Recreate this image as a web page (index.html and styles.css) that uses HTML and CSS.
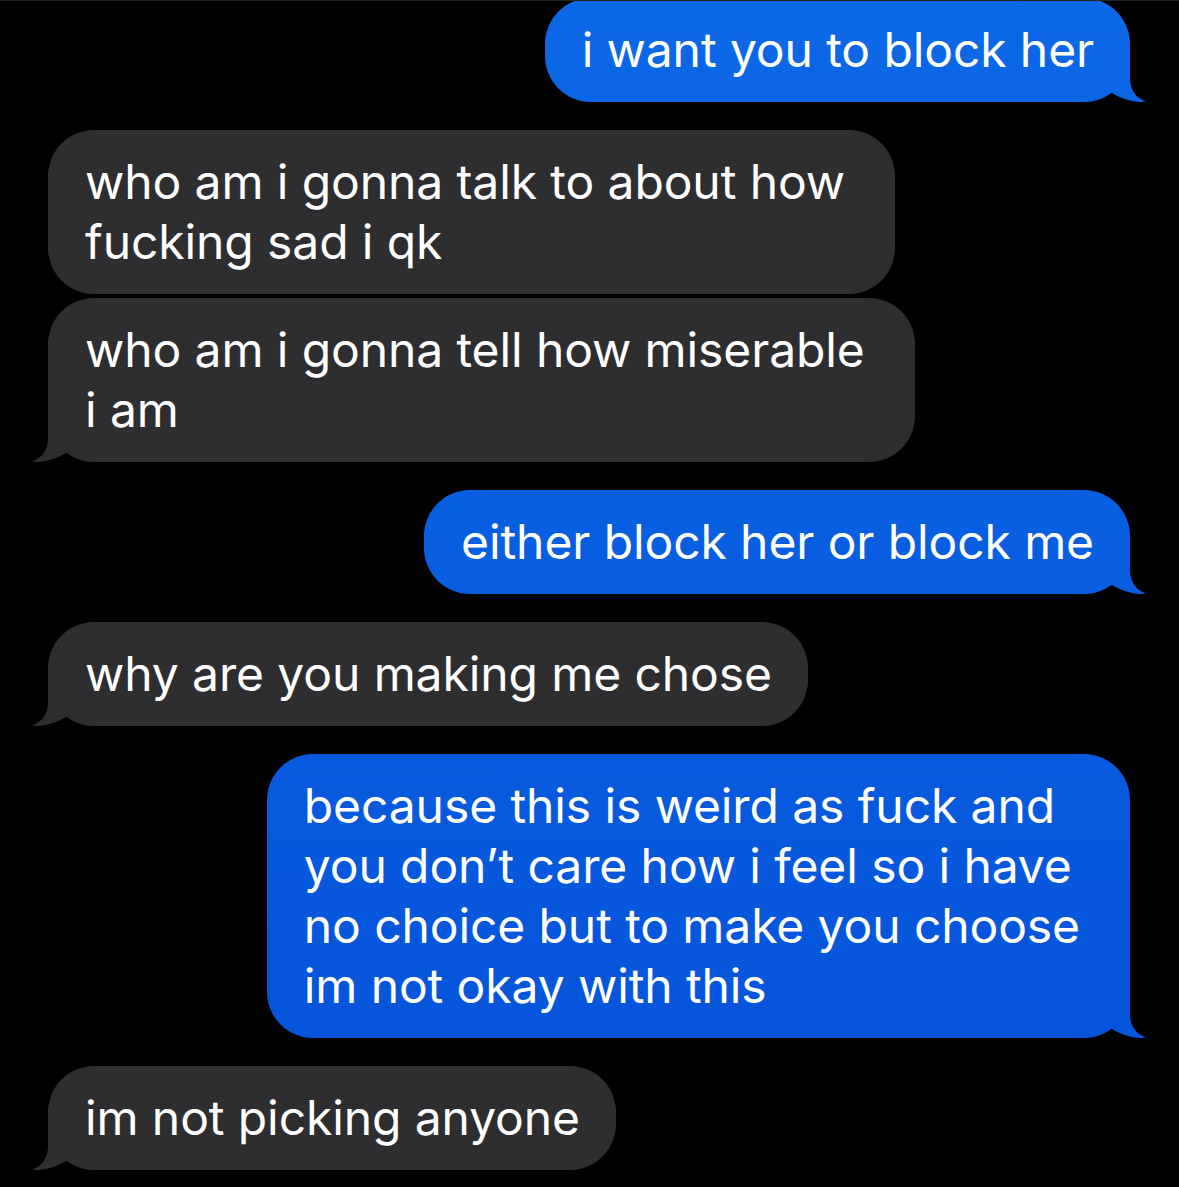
FILE: index.html
```html
<!DOCTYPE html>
<html lang="en">
<head>
<meta charset="utf-8">
<title>Messages</title>
<link rel="stylesheet" href="styles.css">
</head>
<body>
<main class="chat">
  <div class="bubble sent tail">i want you to block her</div>
  <div class="bubble recv multi">who am i gonna talk to about how<br>fucking sad i qk</div>
  <div class="bubble recv multi tail grouped">who am i gonna tell how miserable<br>i am</div>
  <div class="bubble sent tail">either block her or block me</div>
  <div class="bubble recv tail">why are you making me chose</div>
  <div class="bubble sent multi tail">because this is weird as fuck and<br>you don’t care how i feel so i have<br>no choice but to make you choose<br>im not okay with this</div>
  <div class="bubble recv tail">im not picking anyone</div>
</main>
</body>
</html>
```
FILE: styles.css
```css
html, body {
  margin: 0;
  padding: 0;
  background: #000;
}

body {
  border-top: 1px solid #242424;
  height: 1186px;
  overflow: hidden;
}

.chat {
  display: flex;
  flex-direction: column;
  margin-top: -3px;
  padding: 0 49px 0 48px;
  font-family: Inter, "Noto Sans", sans-serif;
}

.bubble {
  position: relative;
  box-sizing: border-box;
  font-size: 48px;
  line-height: 60px;
  letter-spacing: -0.1px;
  color: #fff;
  white-space: nowrap;
  padding: 22px 36px 22px 37px;
  border-radius: 46px;
  margin-top: 28px;
}

.bubble:first-child {
  margin-top: 0;
}

.bubble.grouped {
  margin-top: 4px;
}

.bubble.multi {
  padding-right: 50px;
}

.sent {
  align-self: flex-end;
  background: linear-gradient(to bottom, #0b68e6 0px, #0552da 1187px) fixed;
}

.recv {
  align-self: flex-start;
  background: #2e2e30;
}

.tail::after {
  content: "";
  position: absolute;
  bottom: 0;
  width: 58px;
  height: 48px;
  background: inherit;
  clip-path: path("M14 0 H40 V24 C40 36 46 44 56 47.5 C46 49 33 46 22 39 L14 34 Z");
}

.sent.tail::after {
  right: -18px;
}

.recv.tail::after {
  left: -18px;
  transform: scaleX(-1);
}
```
